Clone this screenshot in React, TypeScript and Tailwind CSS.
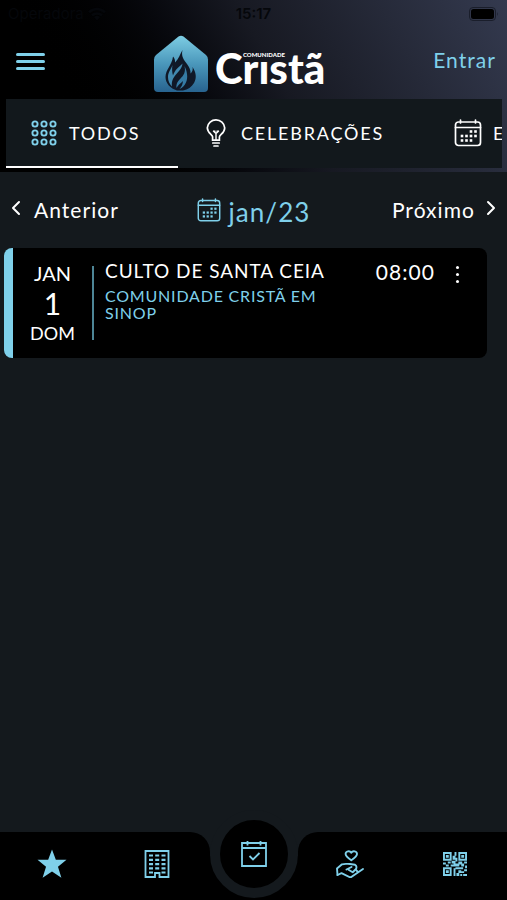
import { useState } from 'react'
import type { ReactNode } from 'react'
import { ChevronLeft, ChevronRight } from 'lucide-react'

const DOTS = [5, 14, 23]

function GridIcon() {
  return (
    <svg viewBox="0 0 28 28" className="h-7 w-7 text-[#7fd0ea]" fill="none" stroke="currentColor" strokeWidth="1.9">
      {DOTS.map((y) => DOTS.map((x) => <circle key={`${x}-${y}`} cx={x} cy={y} r="2.6" />))}
    </svg>
  )
}

function BulbIcon() {
  return (
    <svg viewBox="0 0 28 28" className="h-7 w-7" fill="none" stroke="currentColor" strokeWidth="1.7" strokeLinecap="round" strokeLinejoin="round">
      <path d="M10.6 20.2v-2.4c0-2-5.3-3.8-5.3-9A8.7 8.7 0 0 1 14 .9a8.7 8.7 0 0 1 8.7 8c0 5.2-5.3 7-5.3 9v2.3" />
      <path d="M14 21v-6.5l-2.500-2.200M14 14.500l2.500-2.200M11.500 12.300h1.500M15 12.300h1.500" strokeWidth="1.4" />
      <path d="M10.500 21.200h7M10.800 24h6.400M12 27h4" />
    </svg>
  )
}

function CalendarIcon({ className }: { className: string }) {
  const days = [[17, 12.5], [21.5, 12.5], [8, 17], [12.5, 17], [17, 17], [21.5, 17], [8, 21.5], [12.5, 21.5], [17, 21.5]]
  return (
    <svg viewBox="0 0 28 28" className={className} fill="none" stroke="currentColor" strokeWidth="1.7" strokeLinecap="round">
      <rect x="1.5" y="3" width="25" height="23.5" rx="3" />
      <path d="M1.500 8.500h25M6.500 1v3M21.500 1v3" />
      {days.map(([x, y]) => (
        <rect key={`${x}-${y}`} x={x - 1.3} y={y - 1.3} width="2.6" height="2.6" fill="currentColor" stroke="none" />
      ))}
    </svg>
  )
}

function StarIcon() {
  return (
    <svg viewBox="0 0 30 30" className="h-8 w-8" fill="currentColor">
      <path d="M15 1.500l3.600 9.500h10l-8 6.500 3.200 10.500L15 22 6.200 28l3.200-10.500-8-6.500h10z" />
    </svg>
  )
}

function BuildingIcon() {
  return (
    <svg viewBox="0 0 26 28" className="h-7 w-7" fill="none" stroke="currentColor" strokeWidth="1.8">
      <path d="M1.500 1h23v26h-9v-4h-4.500v4H1.500z" />
      {[5.5, 9.8, 14.1, 18.4, 22.5].map((y) => (
        <path key={y} d={y > 20 ? `M5 ${y}h4M17.500 ${y}h4` : `M5 ${y}h4M11.200 ${y}h4M17.500 ${y}h4`} strokeWidth="2.2" />
      ))}
    </svg>
  )
}

function CheckCalendarIcon() {
  return (
    <svg viewBox="0 0 28 28" className="h-7 w-7" fill="none" stroke="currentColor" strokeWidth="1.8">
      <path d="M2 3h24v23H2zM2 8h24M7.500 1v4.500M20.500 1v4.500" />
      <path d="M9.500 16l3.500 3.500 6.500-6.500" />
    </svg>
  )
}

function DonateIcon() {
  return (
    <svg viewBox="0 0 28 28" className="h-7 w-7" fill="none" stroke="currentColor" strokeWidth="1.9" strokeLinejoin="round" strokeLinecap="round">
      <path d="M15.300 10.200C11.800 7.800 9.600 6 9.600 4c0-3 4.200-3.700 5.700-1.200C16.800.3 21 1 21 4c0 2-2.200 3.800-5.700 6.200z" />
      <path d="M1.500 25l-.5-6.500 5-4.200c2.500-.8 5.500-.3 8-.3l5 .8c2 1.200 1.800 3.400.5 4.700l-2.800 2.700-4.200-2.500" />
      <path d="M10.500 19.500l5-2.500M1.500 25l4-1.800 9 4.300L27 19M19.800 19.500l1.500 1.800" />
    </svg>
  )
}

function QrIcon() {
  return (
    <svg viewBox="0 0 25 25" className="h-6 w-6" fill="currentColor">
      <path fillRule="evenodd" d="M0 0h9v9H0zM2 2v5h5V2zM16 0h9v9h-9zM18 2v5h5V2zM0 16h9v9H0zM2 18v5h5v-5z" />
      <path d="M3 3h3v3H3zM19 3h3v3h-3zM3 19h3v3H3zM12 0h2v4h-2zM10 4h3v4h-3zM13 6h2v4h-2zM0 11h3v2H0zM5 10h3v2H5zM3 13h3v2H3zM9 9h4v3H9zM8 13h3v2H8zM11 12h6v3h-6zM16 10h4v3h-4zM22 10h3v2h-3zM19 12h3v3h-3zM23 14h2v3h-2zM11 17h2v8h-2zM13 16h8v2h-8zM16 19h3v3h-3zM14 22h3v3h-3zM19 20h3v2h-3zM22 18h3v2h-3zM21 23h4v2h-4zM18 23h2v2h-2z" />
    </svg>
  )
}

function Logo() {
  return (
    <a href="#" className="flex items-center gap-[6px] text-white">
      <svg viewBox="0 0 56 58" className="h-[58px] w-14">
        <defs>
          <linearGradient id="casa" x1="0" y1="0" x2="0" y2="1">
            <stop offset="0" stopColor="#7dcde3" />
            <stop offset=".5" stopColor="#4a97bb" />
            <stop offset="1" stopColor="#28638f" />
          </linearGradient>
        </defs>
        <path d="M25.500 1.500q2.500-1.500 5 0L53 20q2 1.700 2 4.500v28.500q0 4-4 4H5q-4 0-4-4V24.500Q1 21.700 3 20z" fill="url(#casa)" />
        <path
          d="M29.500 15c-1.500 6 1 9.500 4.500 14 2.500 3.400 3.700 6 3.500 9.500 1.800-1.500 2.700-4 2-6.500 3.500 5 4.500 11 1.500 16-2.500 4.200-6 6.500-11 7.500h-6c-6.500-2-11.500-7-11.500-13.500 0-7.500 6.500-12 7.500-20.500 1.500 1.500 2.300 3.500 2 6 3.500-3.500 5-8 7.500-12.500z"
          fill="#101827"
        />
        <path
          d="M19.500 30c-1.500 4.500-4.500 7-4.500 12 0 4 1.500 7 4 9.500-.8-5 1-8.500 4-12 3-3.500 6-6 6.500-11-4 4-7.500 6-9.500 12-1-3.500-1.200-7-.5-10.500z"
          fill="#4189b0"
        />
        <path
          d="M31.500 31c1.500 6-1 9.500-4 12.500-2.500 2.500-4.500 5-4 9.500 1.500-3 4-4.500 6.500-7-.5 3-1 5.500-3.500 8 6-2.500 8.500-9 7.500-15-.4-3-1.200-5.500-2.500-8z"
          fill="#357aa4"
        />
      </svg>
      <span className="relative mt-2 text-[42px] leading-[42px] font-black">
        Crıstã
        <span className="absolute top-1 left-7 text-[6px] leading-[7px] font-black">COMUNIDADE</span>
      </span>
    </a>
  )
}

function StatusBar() {
  return (
    <div className="grid h-7 grid-cols-3 items-center px-2 font-['Inter',sans-serif] text-[15px] text-[#05070b]">
      <div className="flex items-center gap-1">
        <span>Operadora</span>
        <svg viewBox="0 0 18 14" className="h-[14px] w-[18px]" fill="none" stroke="currentColor" strokeWidth="2.6">
          <path d="M1 5.200a11.500 11.500 0 0 1 16 0M4 8.500a7.200 7.200 0 0 1 10 0" />
          <path d="M9 13.500l-3-3.200a4.300 4.300 0 0 1 6 0z" fill="currentColor" stroke="none" />
        </svg>
      </div>
      <span className="text-center font-semibold">15:17</span>
      <svg viewBox="0 0 30 14" className="h-[14px] w-[30px] justify-self-end" fill="#000">
        <rect x=".5" y=".5" width="26" height="13" rx="3.500" fill="none" stroke="#1a1e2b" />
        <rect x="2" y="2" width="23" height="10" rx="2.500" />
        <path d="M28 5q1.500 2 0 4z" fill="#1a1e2b" />
      </svg>
    </div>
  )
}

type Tab = { id: string; label: string; icon: ReactNode }

const tabs: Tab[] = [
  { id: 'todos', label: 'TODOS', icon: <GridIcon /> },
  { id: 'celebracoes', label: 'CELEBRAÇÕES', icon: <BulbIcon /> },
  { id: 'eventos', label: 'EVENTOS', icon: <CalendarIcon className="h-7 w-7" /> },
]

function NavLink({ label, children }: { label: string; children: ReactNode }) {
  return (
    <a href="#" aria-label={label} className="flex flex-1 items-center justify-center pb-1">
      {children}
    </a>
  )
}

export default function App() {
  const [active, setActive] = useState('todos')

  return (
    <div className="flex min-h-screen flex-col bg-[#14191d] font-['Lato',sans-serif] text-white">
      <header className="bg-linear-60 from-black from-15% via-[#171922] via-55% to-[#343a4f]">
        <StatusBar />
        <div className="flex h-[71px] items-center justify-between pr-[11px] pl-4">
          <button aria-label="Menu" className="mb-1 flex w-[29px] flex-col gap-1 text-[#7fd0ea]">
            <span className="h-[3px] rounded bg-current" />
            <span className="h-[3px] rounded bg-current" />
            <span className="h-[3px] rounded bg-current" />
          </button>
          <Logo />
          <a href="#" className="mb-2 text-[21px] tracking-wider text-[#7fd0ea]">Entrar</a>
        </div>
        <div className="pr-[5px] pb-1 pl-[6px]">
          <div className="flex overflow-hidden bg-[#12181c]">
            {tabs.map((tab) => (
              <button
                key={tab.id}
                onClick={() => setActive(tab.id)}
                className={`flex h-[69px] shrink-0 items-center gap-[11px] border-b-2 px-6 text-lg tracking-widest ${
                  tab.id === 'todos' ? 'w-[172px]' : 'min-w-[252px]'
                } ${active === tab.id ? 'border-white' : 'border-transparent'}`}
              >
                {tab.icon}
                {tab.label}
              </button>
            ))}
          </div>
        </div>
      </header>

      <main className="flex-1">
        <div className="grid h-[76px] grid-cols-[1fr_auto_1fr] items-center px-1 text-[21px] tracking-wider">
          <button className="flex items-center gap-[6px] justify-self-start">
            <ChevronLeft size={24} className="mb-1" />
            Anterior
          </button>
          <button className="flex items-center gap-2 text-[26px] text-[#7fd0ea]">
            <CalendarIcon className="h-6 w-6" />
            <span className="pt-1">jan/23</span>
          </button>
          <button className="flex items-center gap-1 justify-self-end">
            Próximo
            <ChevronRight size={24} className="mb-1" />
          </button>
        </div>

        <article className="mr-5 ml-1 flex min-h-[110px] overflow-hidden rounded-lg border-l-[9px] border-[#7fd0ea] bg-black">
          <div className="my-[18px] flex w-[81px] flex-col items-center justify-between border-r-2 border-[#4d8596] text-lg leading-none">
            <span className="text-xl leading-[14px]">JAN</span>
            <span className="text-3xl leading-[30px]">1</span>
            <span className="leading-[14px]">DOM</span>
          </div>
          <div className="flex-1 pt-[11px] pl-[11px]">
            <h2 className="text-[19px] leading-6 tracking-wider">CULTO DE SANTA CEIA</h2>
            <p className="mt-1 max-w-[230px] text-base leading-[17px] tracking-wider text-[#7fd0ea]">COMUNIDADE CRISTÃ EM SINOP</p>
          </div>
          <div className="flex items-start pt-3 pr-5">
            <time className="text-[21px] leading-6 tracking-wider">08:00</time>
            <button aria-label="Opções" className="ml-3 flex h-7 w-5 flex-col items-center justify-center gap-1">
              <span className="size-[3px] rounded-full bg-white" />
              <span className="size-[3px] rounded-full bg-white" />
              <span className="size-[3px] rounded-full bg-white" />
            </button>
          </div>
        </article>
      </main>

      <nav className="sticky bottom-0 flex h-[68px] text-[#7fd0ea]">
        <div className="flex flex-1 rounded-tr-[20px] bg-black">
          <NavLink label="Início"><StarIcon /></NavLink>
          <NavLink label="Igreja"><BuildingIcon /></NavLink>
        </div>
        <div className="w-[88px] bg-linear-to-b from-transparent from-35% to-black to-35%">
          <a
            href="#"
            aria-label="Agenda"
            className="-mt-[22px] flex size-[88px] items-center justify-center rounded-full border-10 border-[#14191d] bg-black"
          >
            <CheckCalendarIcon />
          </a>
        </div>
        <div className="flex flex-1 rounded-tl-[20px] bg-black">
          <NavLink label="Doações"><DonateIcon /></NavLink>
          <NavLink label="QR Code"><QrIcon /></NavLink>
        </div>
      </nav>
    </div>
  )
}
